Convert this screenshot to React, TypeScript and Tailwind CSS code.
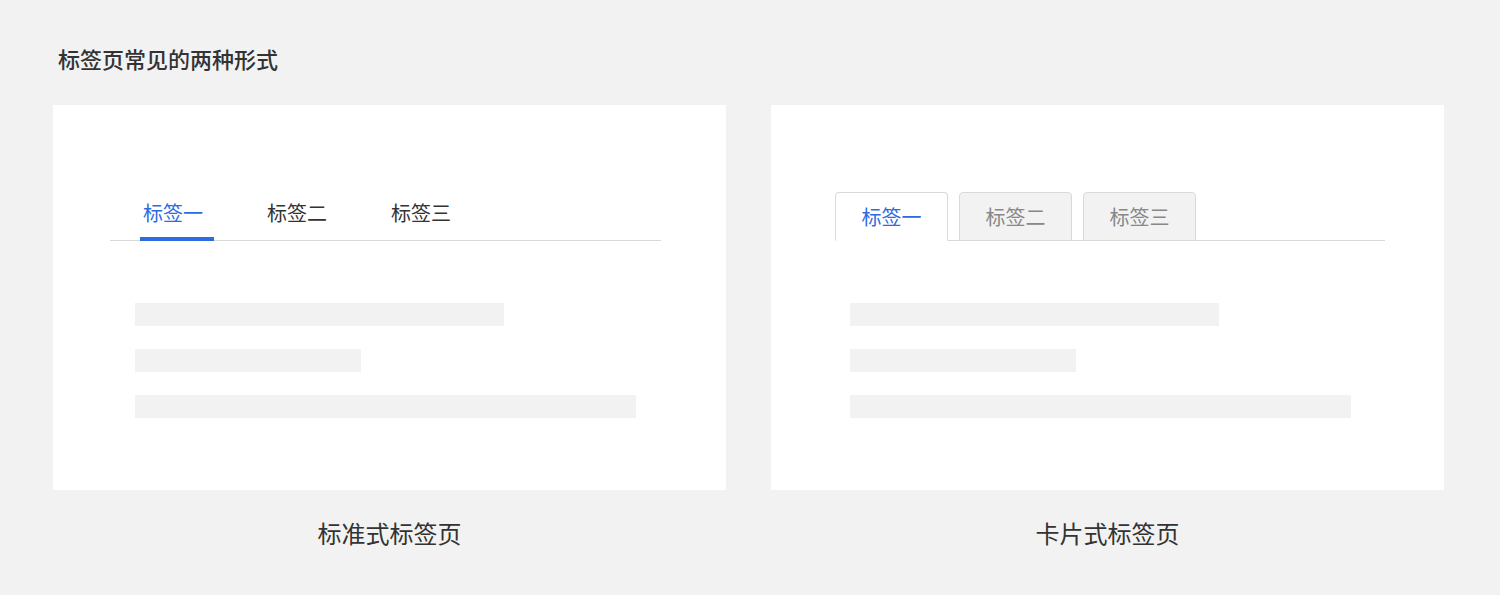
const font = { fontFamily: '"Noto Sans CJK SC", "Noto Sans", sans-serif' };

function Bars() {
  return (
    <div className="flex flex-col gap-[23px]">
      <div className="h-[23px] w-[369px] bg-[#f2f2f2]" />
      <div className="h-[23px] w-[226px] bg-[#f2f2f2]" />
      <div className="h-[23px] w-[501px] bg-[#f2f2f2]" />
    </div>
  );
}

function StandardTabs() {
  const tabs = ["标签一", "标签二", "标签三"];
  return (
    <div className="h-[385px] w-[673px] bg-white pt-[194px-0] pt-[88px]">
      <div className="ml-[57px] flex w-[551px] border-b border-[#d9d9d9] pl-[30px]">
        {tabs.map((t, i) => (
          <div key={t} className="relative flex h-[47px] w-[124px] justify-start">
            <span className={`ml-[3px] text-[20px] leading-[28px] mt-[6px] ${i === 0 ? "text-[#2f6be0]" : "text-[#333]"}`}>{t}</span>
            {i === 0 && <div className="absolute -bottom-px left-0 h-[4px] w-[74px] bg-[#2f6be0]" />}
          </div>
        ))}
      </div>
      <div className="ml-[82px] mt-[62px]">
        <Bars />
      </div>
    </div>
  );
}

function CardTabs() {
  const tabs = ["标签一", "标签二", "标签三"];
  return (
    <div className="h-[385px] w-[673px] bg-white pt-[87px]">
      <div className="ml-[64px] flex w-[550px] gap-[11px] border-b border-[#d9d9d9]">
        {tabs.map((t, i) => (
          <div
            key={t}
            className={`-mb-px flex h-[49px] w-[113px] items-center justify-center rounded-t-[4px] border border-[#d9d9d9] text-[20px] ${
              i === 0 ? "border-b-white bg-white text-[#2f6be0]" : "bg-[#f2f2f2] text-[#888]"
            }`}
          >
            {t}
          </div>
        ))}
      </div>
      <div className="ml-[79px] mt-[62px]">
        <Bars />
      </div>
    </div>
  );
}

export default function App() {
  return (
    <div className="h-[595px] w-[1500px] bg-[#f2f2f2] text-[#333]" style={font}>
      <div className="pl-[58px] pt-[43px] text-[22px] font-medium leading-[30px] text-[#333]">标签页常见的两种形式</div>
      <div className="ml-[53px] mt-[32px] flex gap-[45px]">
        <div className="flex flex-col items-center">
          <StandardTabs />
          <div className="mt-[27px] text-[24px] leading-[32px]">标准式标签页</div>
        </div>
        <div className="flex flex-col items-center">
          <CardTabs />
          <div className="mt-[27px] text-[24px] leading-[32px]">卡片式标签页</div>
        </div>
      </div>
    </div>
  );
}
